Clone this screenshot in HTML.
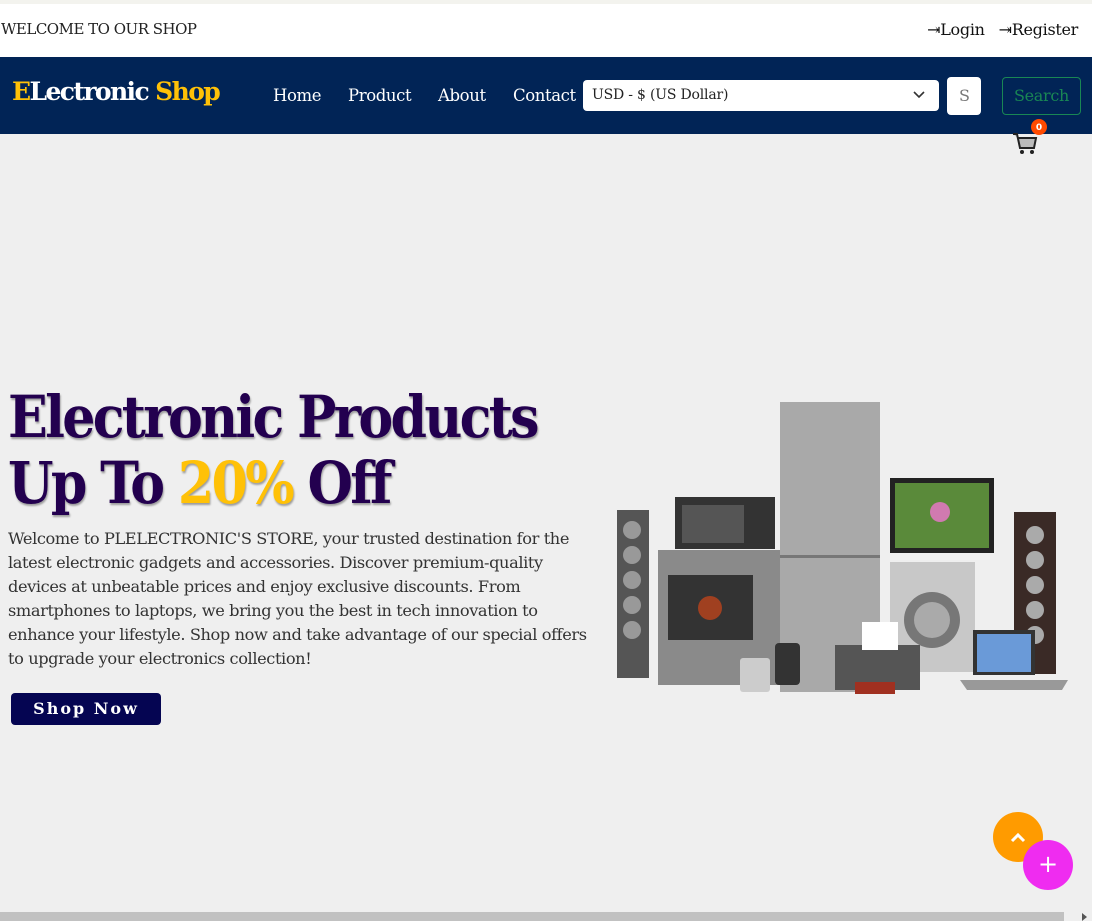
<!DOCTYPE html>
<html><head><meta charset="utf-8"><style>
*{margin:0;padding:0;box-sizing:border-box}
body{width:1096px;height:921px;overflow:hidden;background:#efefef;font-family:"DejaVu Serif","Liberation Serif",serif;position:relative}
.top{position:absolute;left:0;top:0;width:1092px;height:57px;background:#fff;border-top:4px solid #f3f3ee}
.top .w{position:absolute;left:1px;top:16px;font-size:15px;color:#222;letter-spacing:-0.5px}
.top .r{position:absolute;right:14px;top:16px;font-size:16px;color:#111;letter-spacing:-0.3px}
.top .r span{margin-left:14px}
.rs{position:absolute;right:0;top:0;width:4px;height:921px;background:#fff}
nav{position:absolute;left:0;top:57px;width:1092px;height:77px;background:#012456}
.logo{position:absolute;left:12px;top:20px;font-size:25px;font-weight:bold;color:#fff;letter-spacing:-1.6px}
.logo b{color:#ffc107}
.links{position:absolute;top:29px;font-size:16.5px;color:#fff;letter-spacing:-0.4px}
.sel{position:absolute;left:583px;top:23px;width:356px;height:31px;background:#fff;border-radius:4px;font-size:14px;padding:7px 9px;color:#222;letter-spacing:-0.2px}
.sel svg{position:absolute;right:14px;top:11px}
.sin{position:absolute;left:947px;top:20px;width:34px;height:38px;background:#fff;border-radius:4px;color:#777;font-size:16px;padding:9px 0 0 12px}
.sb{position:absolute;left:1002px;top:20px;width:79px;height:38px;border:1px solid #198754;border-radius:4px;color:#198754;font-size:16px;text-align:center;padding-top:8px;letter-spacing:-0.3px}
h1{position:absolute;left:8px;top:384px;font-size:58px;line-height:66px;color:#23004f;font-weight:bold;letter-spacing:-3px;text-shadow:1px 2px 2px rgba(0,0,0,.35);transform:scaleX(0.9);transform-origin:0 0;white-space:nowrap}
h1 span{color:#ffc107}
p{position:absolute;left:8px;top:527px;width:585px;font-size:16.2px;line-height:24px;color:#333;letter-spacing:-0.4px}
.btn{position:absolute;left:11px;top:693px;width:150px;height:32px;background:#050552;border-radius:4px;color:#fff;font-size:16px;font-weight:bold;letter-spacing:2px;text-align:center;padding-top:6px}
.up{position:absolute;left:993px;top:812px;width:50px;height:50px;border-radius:50%;background:#ff9b00}
.plus{position:absolute;left:1023px;top:840px;width:50px;height:50px;border-radius:50%;background:#ef2cf0;color:#fff;font-size:24px;text-align:center;line-height:48px;font-family:"DejaVu Sans",sans-serif}
.hs{position:absolute;left:0;top:912px;width:1064px;height:9px;background:#c1c1c1}
</style></head><body>
<div class="top"><div class="w">WELCOME TO OUR SHOP</div><div class="r"><span>⇥Login</span><span>⇥Register</span></div></div>
<div class="rs"></div>
<nav>
<div class="logo"><b>E</b>Lectronic <b>Shop</b></div>
<div class="links" style="left:273px">Home</div>
<div class="links" style="left:348px">Product</div>
<div class="links" style="left:438px">About</div>
<div class="links" style="left:513px">Contact</div>
<div class="sel">USD - $ (US Dollar)<svg width="12" height="8"><path d="M1 1l5 5 5-5" stroke="#333" stroke-width="1.6" fill="none"/></svg></div>
<div class="sin">S</div>
<div class="sb">Search</div>
</nav>
<svg style="position:absolute;left:1010px;top:118px" width="40" height="40">
<circle cx="29" cy="9" r="8" fill="#ff4a00"/><text x="29" y="12" font-size="9" font-weight="bold" fill="#fff" text-anchor="middle" font-family="DejaVu Sans">0</text>
<path d="M3 16h4l3 14h14l2-10H8" stroke="#222" stroke-width="2" fill="#bbb"/><circle cx="12" cy="34" r="2" fill="#222"/><circle cx="22" cy="34" r="2" fill="#222"/>
</svg>
<h1>Electronic Products<br>Up To <span>20%</span> Off</h1>
<p>Welcome to PLELECTRONIC'S STORE, your trusted destination for the latest electronic gadgets and accessories. Discover premium-quality devices at unbeatable prices and enjoy exclusive discounts. From smartphones to laptops, we bring you the best in tech innovation to enhance your lifestyle. Shop now and take advantage of our special offers to upgrade your electronics collection!</p>
<div class="btn">Shop Now</div>
<svg style="position:absolute;left:610px;top:400px" width="465" height="300">
<rect x="7" y="110" width="32" height="168" fill="#555"/>
<g fill="#999"><circle cx="22" cy="130" r="9"/><circle cx="22" cy="155" r="9"/><circle cx="22" cy="180" r="9"/><circle cx="22" cy="205" r="9"/><circle cx="22" cy="230" r="9"/></g>
<rect x="48" y="150" width="122" height="135" fill="#8a8a8a"/><rect x="58" y="175" width="85" height="65" fill="#333"/><circle cx="100" cy="208" r="12" fill="#a04020"/>
<rect x="65" y="97" width="100" height="52" fill="#333"/><rect x="72" y="105" width="62" height="38" fill="#555"/>
<rect x="170" y="2" width="100" height="290" fill="#a9a9a9"/><rect x="170" y="155" width="100" height="3" fill="#777"/>
<rect x="280" y="78" width="104" height="75" fill="#222"/><rect x="285" y="83" width="94" height="65" fill="#5a8a3a"/><circle cx="330" cy="112" r="10" fill="#d07ab0"/>
<rect x="280" y="162" width="85" height="110" fill="#c8c8c8"/><circle cx="322" cy="220" r="28" fill="#777"/><circle cx="322" cy="220" r="18" fill="#aaa"/>
<rect x="225" y="245" width="85" height="45" fill="#555"/><rect x="252" y="222" width="36" height="28" fill="#fff"/><rect x="245" y="282" width="40" height="12" fill="#a03020"/>
<rect x="404" y="112" width="42" height="162" fill="#3a2a26"/>
<g fill="#aaa"><circle cx="425" cy="135" r="9"/><circle cx="425" cy="160" r="9"/><circle cx="425" cy="185" r="9"/><circle cx="425" cy="210" r="9"/><circle cx="425" cy="235" r="9"/></g>
<rect x="363" y="230" width="62" height="45" fill="#333"/><rect x="367" y="234" width="54" height="38" fill="#6a9ad8"/>
<path d="M350 280h108l-6 10h-95z" fill="#999"/>
<rect x="165" y="243" width="25" height="42" rx="4" fill="#333"/><rect x="130" y="258" width="30" height="34" rx="3" fill="#ccc"/>
</svg>
<div class="up"><svg width="50" height="50"><path d="M19 29l6-6 6 6" stroke="#fff" stroke-width="3" fill="none"/></svg></div>
<div class="plus">+</div>
<div class="hs"></div>
<svg style="position:absolute;left:1082px;top:913px" width="6" height="8"><path d="M0 0l5 4-5 4z" fill="#555"/></svg>
</body></html>
